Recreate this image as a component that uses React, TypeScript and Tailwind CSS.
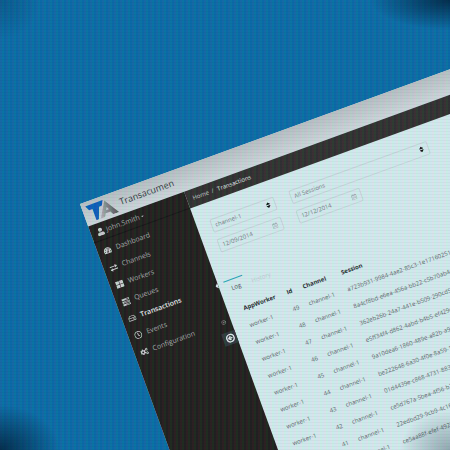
import type { ReactNode } from "react";
import { FaUser, FaTachometerAlt, FaThLarge, FaCogs, FaRegHdd, FaRegClock, FaRegCalendarAlt, FaSort } from "react-icons/fa";
import { CircleArrowLeft, CircleX } from "lucide-react";

function SwapIcon() {
  return (
    <svg viewBox="0 0 16 16" className="size-[9px]" aria-hidden="true">
      <path d="M0 4H11V1.5L16 5L11 8.5V6H0Z M16 10H5V7.8L0 11.3L5 14.8V12.2H16Z" fill="currentColor" />
    </svg>
  );
}

function QueueIcon() {
  return (
    <svg viewBox="0 0 16 16" className="size-[9px]" aria-hidden="true">
      <path d="M0 1H16V5H0Z M0 6.3H16V10.3H0Z M0 11.6H16V15.6H0Z" fill="currentColor" />
      <path d="M9 3H15 M4 8.3H15 M7 13.6H15" stroke="#242220" strokeWidth="1.3" />
    </svg>
  );
}

const nav: { label: string; icon: ReactNode; active?: boolean }[] = [
  { label: "Dashboard", icon: <FaTachometerAlt /> },
  { label: "Channels", icon: <SwapIcon /> },
  { label: "Workers", icon: <FaThLarge /> },
  { label: "Queues", icon: <QueueIcon /> },
  { label: "Transactions", icon: <FaRegHdd />, active: true },
  { label: "Events", icon: <FaRegClock /> },
  { label: "Configuration", icon: <FaCogs /> },
];

const sessions = [
  "a723b931-9984-4ae2-85c3-1e1716025173",
  "8a4cf8bd-e6ea-456a-bb22-c5b70ab4e1d2",
  "362eb26b-24a7-441e-b509-290cd5f7a801",
  "e5ff34f4-d862-4abd-b4b5-ef429c10b7d6",
  "9a10dea6-1860-489e-a82b-a93c5e2f7b10",
  "be222648-6a30-4f0e-8a59-1d7c3b9e0f42",
  "01d4439e-c868-4731-883a-5e9b2c7d1f06",
  "ce5d767a-5bea-4f56-b2c1-8d3e7a9f0b54",
  "22edbd29-9cb9-4c16-9f3a-7b1e5d2c8a60",
  "ce5aa88f-efef-492b-8c7d-3a1f9e5b2d40",
];

function Logo() {
  return (
    <svg viewBox="0 0 30 18" className="h-[18px] w-[30px] shrink-0" aria-hidden="true">
      <defs>
        <linearGradient id="steel" x1="0" y1="0" x2="1" y2="0">
          <stop offset="0" stopColor="#b4b8ba" />
          <stop offset="0.5" stopColor="#85898b" />
          <stop offset="1" stopColor="#4e5152" />
        </linearGradient>
      </defs>
      <path d="M20 2 L30 18 H24 L22 14.5 H17 L15 18 H10.5 Z M20 9 L18.3 11.7 H21.4 Z" fill="url(#steel)" fillRule="evenodd" />
      <path d="M0 1 H18.5 L16 6 H13 L8.5 18 H6 V6 H2.5 Z" fill="#0c5fb8" />
    </svg>
  );
}

function SelectField({ label, value, className }: { label: string; value: string; className: string }) {
  return (
    <label className={`relative block h-[14px] ${className}`}>
      <select aria-label={label} className="block h-full w-full appearance-none rounded-[2px] border border-[#c6d8da] bg-transparent pl-[3px] text-[6px] leading-[12px] text-[#737d7e]">
        <option>{value}</option>
      </select>
      <FaSort className="pointer-events-none absolute right-[4px] top-[3px] size-[7px] text-[#111]" />
    </label>
  );
}

function DateField({ label, value }: { label: string; value: string }) {
  return (
    <label className="relative block h-[14px] w-[68px]">
      <input aria-label={label} defaultValue={value} className="block h-full w-full rounded-[2px] border border-[#c6d8da] bg-transparent pl-[3px] text-[6px] leading-[12px] text-[#737d7e]" />
      <FaRegCalendarAlt className="pointer-events-none absolute right-[5px] top-[4px] size-[6px] text-[#a3b1b3]" />
    </label>
  );
}

export default function App() {
  return (
    <div className="relative h-screen w-full overflow-hidden bg-[#0b6ba5] font-['Open_Sans','Noto_Sans',sans-serif]">
      <div className="absolute left-[80px] top-[204px] flex w-[150vw] origin-top-left -rotate-20 flex-col bg-[#d6ecee]">
        <header className="flex h-6 items-center gap-1 bg-linear-to-b from-[#b9c0c3] to-[#d0d9dc] pl-1">
          <Logo />
          <h1 className="text-[9px] leading-[12px] text-[#33383a]">Transacumen</h1>
        </header>

        <div className="flex">
          <aside className="relative flex h-[150vh] w-[102px] shrink-0 flex-col bg-[#221f1b] text-[7px] leading-[10px] text-[#a7a9a9]">
            <button type="button" className="flex h-[18px] items-center gap-[2px] border-b border-[#151413] pl-[6px]">
              <FaUser className="size-[8px] text-[#c8cccc]" />
              <span>John.Smith</span>
              <svg viewBox="0 0 6 4" className="h-[2px] w-[3px]" aria-hidden="true">
                <path d="M0 0H6L3 4Z" fill="currentColor" />
              </svg>
            </button>
            <nav className="flex flex-col pt-[2px]">
              {nav.map((n) => (
                <a key={n.label} href="#" className={n.active ? "flex h-[18px] items-center gap-[5px] pl-[6px] font-semibold text-[#edf1f1]" : "flex h-[18px] items-center gap-[5px] pl-[6px]"}>
                  <span className="flex w-2 shrink-0 justify-center text-[8px] text-[#ccd0d0]">{n.icon}</span>
                  {n.label}
                </a>
              ))}
            </nav>
            <div className="absolute right-0 top-[97px] h-[6px] w-[3px] bg-[#d6ecee] [clip-path:polygon(100%_0,0_50%,100%_100%)]" />
            <button type="button" aria-label="Close" className="absolute right-[5px] top-[134px] text-[#a4a8a8]">
              <CircleX className="size-[5px]" />
            </button>
            <button type="button" aria-label="Collapse menu" className="absolute right-0 top-[147px] flex h-[13px] w-[14px] items-center justify-center bg-[#30383b] text-[#e2eaea]">
              <CircleArrowLeft className="size-[9px]" strokeWidth={4} />
            </button>
          </aside>

          <main className="min-w-0 grow">
            <nav aria-label="Breadcrumb" className="flex h-[18px] items-center gap-[3px] bg-[#32302e] pl-[6px] text-[6px] leading-[9px] text-[#c3c9c9]">
              <a href="#">Home</a>
              <span>/</span>
              <span className="pl-px text-[#e6ebeb]">Transactions</span>
            </nav>

            <form className="flex flex-col gap-[7px] pl-[14px] pt-[17px]">
              <div className="flex gap-4">
                <SelectField label="Channel" value="channel-1" className="w-[68px]" />
                <SelectField label="Session" value="All Sessions" className="w-[147px]" />
              </div>
              <div className="flex gap-4">
                <DateField label="From" value="12/09/2014" />
                <DateField label="To" value="12/12/2014" />
              </div>
            </form>

            <div className="mt-[28px] flex pl-[6px] text-[6px] leading-[16px]">
              <button type="button" className="w-5 border-t border-[#2ba5b8] pl-px text-[#454d4e]">Log</button>
              <button type="button" className="border-t border-transparent pl-[7px] text-[#bed0d2]">History</button>
            </div>

            <table className="ml-[16px] mt-[7px] table-fixed text-[6px] text-[#5d6768]">
              <thead>
                <tr className="h-[17px] text-left text-[#25292a]">
                  <th className="w-[43px] p-0 font-bold">AppWorker</th>
                  <th className="w-5 p-0 pl-[3px] font-bold">Id</th>
                  <th className="w-[41px] p-0 font-bold">Channel</th>
                  <th className="w-[160px] p-0 font-bold">Session</th>
                </tr>
              </thead>
              <tbody>
                {sessions.map((s, i) => (
                  <tr key={s} className="h-[18px]">
                    <td className="p-0">worker-1</td>
                    <td className="p-0 pl-[3px]">{49 - i}</td>
                    <td className="p-0">channel-1</td>
                    <td className="p-0">{s}</td>
                  </tr>
                ))}
              </tbody>
            </table>
          </main>
        </div>
      </div>

      <div className="pointer-events-none absolute inset-0 bg-[repeating-linear-gradient(90deg,rgba(255,60,190,0.05)_0px,rgba(255,60,190,0.05)_2px,rgba(0,255,120,0.06)_2px,rgba(0,255,120,0.06)_4px,rgba(0,70,255,0.03)_4px,rgba(0,70,255,0.03)_6px)]" />
      <div className="pointer-events-none absolute inset-0 bg-[repeating-linear-gradient(0deg,rgba(0,0,0,0.03)_0px,rgba(0,0,0,0.03)_1px,transparent_1px,transparent_3px)]" />
      <div className="pointer-events-none absolute inset-0 bg-[radial-gradient(80px_30px_at_100%_0%,rgba(0,20,40,0.7)_0%,transparent_100%),radial-gradient(60px_45px_at_0%_100%,rgba(0,20,40,0.7)_0%,transparent_100%),radial-gradient(40px_40px_at_0%_0%,rgba(0,20,40,0.2)_0%,transparent_100%),radial-gradient(50px_40px_at_100%_100%,rgba(0,20,40,0.3)_0%,transparent_100%)]" />
    </div>
  );
}
